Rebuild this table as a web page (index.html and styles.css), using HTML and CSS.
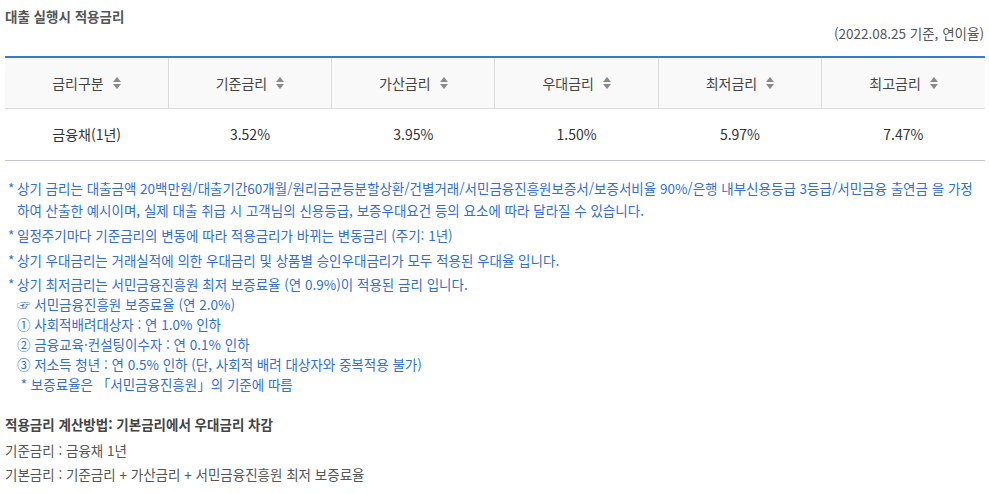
FILE: index.html
```html
<!DOCTYPE html>
<html lang="ko">
<head>
<meta charset="utf-8">
<link rel="stylesheet" href="styles.css">
</head>
<body>
<div class="page">
  <h3 class="title">대출 실행시 적용금리</h3>
  <div class="basis">(2022.08.25 기준, 연이율)</div>
  <table class="rates">
    <thead>
      <tr>
        <th><span class="th-in">금리구분<i class="sort"></i></span></th>
        <th><span class="th-in">기준금리<i class="sort"></i></span></th>
        <th><span class="th-in">가산금리<i class="sort"></i></span></th>
        <th><span class="th-in">우대금리<i class="sort"></i></span></th>
        <th><span class="th-in">최저금리<i class="sort"></i></span></th>
        <th><span class="th-in">최고금리<i class="sort"></i></span></th>
      </tr>
    </thead>
    <tbody>
      <tr>
        <td>금융채(1년)</td>
        <td>3.52%</td>
        <td>3.95%</td>
        <td>1.50%</td>
        <td>5.97%</td>
        <td>7.47%</td>
      </tr>
    </tbody>
  </table>
  <ul class="notes">
    <li>상기 금리는 대출금액 20백만원/대출기간60개월/원리금균등분할상환/건별거래/서민금융진흥원보증서/보증서비율 90%/은행 내부신용등급 3등급/서민금융 출연금 을 가정하여 산출한 예시이며, 실제 대출 취급 시 고객님의 신용등급, 보증우대요건 등의 요소에 따라 달라질 수 있습니다.</li>
    <li>일정주기마다 기준금리의 변동에 따라 적용금리가 바뀌는 변동금리 (주기: 1년)</li>
    <li>상기 우대금리는 거래실적에 의한 우대금리 및 상품별 승인우대금리가 모두 적용된 우대율 입니다.</li>
    <li class="multi">상기 최저금리는 서민금융진흥원 최저 보증료율 (연 0.9%)이 적용된 금리 입니다.<br>☞ 서민금융진흥원 보증료율 (연 2.0%)<br>① 사회적배려대상자 : 연 1.0% 인하<br>② 금융교육·컨설팅이수자 : 연 0.1% 인하<br>③ 저소득 청년 : 연 0.5% 인하 (단, 사회적 배려 대상자와 중복적용 불가)<br>&nbsp;* 보증료율은 「서민금융진흥원」의 기준에 따름</li>
  </ul>
  <p class="calc-title">적용금리 계산방법: 기본금리에서 우대금리 차감</p>
  <p class="calc first">기준금리 : 금융채 1년</p>
  <p class="calc">기본금리 : 기준금리 + 가산금리 + 서민금융진흥원 최저 보증료율</p>
</div>
</body>
</html>
```

FILE: styles.css
```css
* { box-sizing: border-box; }
html, body { margin: 0; padding: 0; background: #fff; }
body {
  font-family: "Noto Sans CJK KR", "Noto Sans", sans-serif;
  color: #555;
  font-size: 13.5px;
}
.page { padding: 6px 4px 0 5px; }
.title {
  margin: 0;
  font-size: 13.5px;
  font-weight: 700;
  color: #555;
  line-height: 20px;
}
.basis {
  text-align: right;
  line-height: 20px;
  margin-top: -3px;
  color: #555;
  padding-right: 1px;
}
.rates {
  width: 100%;
  border-collapse: collapse;
  table-layout: fixed;
  margin-top: 13px;
  border-top: 2px solid #3a77d2;
  border-bottom: 1px solid #c3c3d3;
}
.rates th {
  height: 51px;
  background: #f9f9f9;
  border-bottom: 1px solid #dcdcdc;
  border-left: 1px solid #dcdcdc;
  font-weight: 400;
  font-size: 14px;
  color: #444;
  padding: 0;
}
.rates th:first-child { border-left: 0; }
.th-in {
  display: inline-flex;
  align-items: center;
  gap: 9px;
}
.sort {
  display: inline-flex;
  flex-direction: column;
  gap: 2px;
}
.sort::before, .sort::after {
  content: "";
  display: block;
  width: 0;
  height: 0;
  border-left: 4.5px solid transparent;
  border-right: 4.5px solid transparent;
}
.sort::before { border-bottom: 5px solid #8a8a8a; }
.sort::after { border-top: 5px solid #8a8a8a; }
.rates td {
  height: 52px;
  text-align: center;
  font-size: 14px;
  color: #333;
  padding: 0;
}
.notes {
  list-style: none;
  margin: 16px 0 0;
  padding: 0 0 0 12px;
  color: #3070d4;
}
.notes li {
  position: relative;
  line-height: 22px;
  margin-bottom: 3px;
}
.notes li::before {
  content: "*";
  position: absolute;
  left: -9px;
  top: 0;
}
.notes li.multi { line-height: 20px; }
.calc-title {
  margin: 19px 0 0;
  font-weight: 700;
  color: #444;
  line-height: 22px;
}
.calc {
  margin: 2px 0 0;
  line-height: 22px;
  color: #555;
}
.calc.first { margin-top: 4px; }
```
